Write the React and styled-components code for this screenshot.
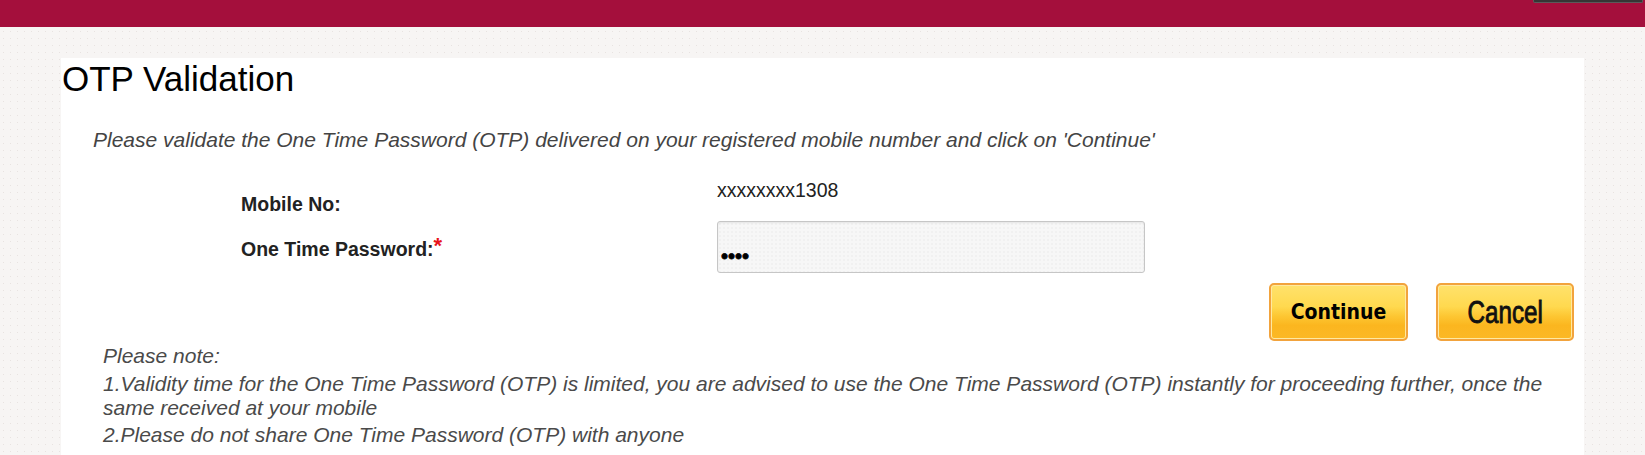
import React from 'react';
import styled, { createGlobalStyle } from 'styled-components';

const GlobalStyle = createGlobalStyle`
    html, body {
        margin: 0;
        padding: 0;
        overflow: hidden;
    }

    body {
        font-family: "Liberation Sans", Arial, sans-serif;
        background-color: #f7f5f4;
        background-image: radial-gradient(#e8e3e1 0.7px, transparent 1px);
        background-size: 7px 7px;
    }
`;

const Header = styled.header`
    position: relative;
    height: 27px;
    background-color: #a40f3c;
`;

const HeaderTab = styled.div`
    position: absolute;
    top: 0;
    right: 2px;
    width: 108px;
    height: 2px;
    background-color: #353535;
    border: 1px solid #5a5a5a;
    border-top: none;
    border-radius: 0 0 2px 2px;
`;

const Page = styled.main`
    padding: 31px 0 0 61px;
`;

const Panel = styled.section`
    width: 1523px;
    min-height: 420px;
    background-color: #fff;
`;

const Title = styled.h1`
    margin: 0;
    padding: 1px 0 0 1px;
    font-size: 35px;
    line-height: 40px;
    font-weight: normal;
    color: #000;
`;

const Intro = styled.p`
    margin: 29px 0 0 32px;
    font-size: 21px;
    line-height: 24px;
    font-style: italic;
    color: #444;
`;

const FormTable = styled.div`
    margin-top: 26px;
    padding-left: 180px;
`;

const FieldRow = styled.div`
    display: flex;
    align-items: flex-start;
    height: ${(p) => p.$height}px;
`;

const Label = styled.div`
    width: 476px;
    padding-top: ${(p) => p.$top}px;
    font-size: 19.5px;
    line-height: 24px;
    font-weight: bold;
    color: #222;
`;

const Required = styled.span`
    color: #e8141c;
    font-size: 22px;
    vertical-align: 3px;
`;

const Value = styled.div`
    font-size: 19.5px;
    line-height: 24px;
    color: #222;
`;

const PasswordInput = styled.input`
    box-sizing: border-box;
    width: 428px;
    height: 52px;
    margin: 0;
    padding: 18px 3px 0;
    border: 1px solid #c6c6c6;
    border-radius: 3px;
    background-color: #f7f7f7;
    background-image: radial-gradient(#eeeeee 0.6px, transparent 0.9px);
    background-size: 4px 4px;
    box-shadow: inset 0 1px 2px rgba(0, 0, 0, 0.08);
    font-family: "Liberation Sans", Arial, sans-serif;
    font-size: 20px;
    color: #000;
    -webkit-text-stroke: 0.8px #000;
    outline: none;
`;

const ButtonRow = styled.div`
    display: flex;
    justify-content: flex-end;
    gap: 28px;
    margin-top: 10px;
    padding-right: 10px;
`;

const YellowButton = styled.button`
    box-sizing: border-box;
    width: ${(p) => p.$width}px;
    height: 58px;
    margin: 0;
    padding: 0;
    border: 2px solid #f2a33d;
    border-radius: 5px;
    background: linear-gradient(
        #ffe26c 0%,
        #ffd94f 40%,
        #fdc632 58%,
        #fbb61f 75%,
        #fcb825 100%
    );
    box-shadow: inset 0 0 0 1px #ffe9a0;
    color: #000;
    cursor: pointer;
`;

const ContinueText = styled.span`
    font-family: "DejaVu Sans Condensed", "DejaVu Sans", sans-serif;
    font-stretch: condensed;
    font-weight: bold;
    font-size: 21px;
`;

const CancelText = styled.span`
    display: inline-block;
    padding-top: 2px;
    font-family: "Liberation Sans", Arial, sans-serif;
    font-size: 31px;
    color: #111;
    -webkit-text-stroke: 0.9px #111;
    transform: scaleX(0.78);
`;

const Notes = styled.div`
    margin-top: 3px;
    padding: 0 10px 0 42px;
    font-size: 21px;
    line-height: 24px;
    font-style: italic;
    color: #4a4a4a;
`;

const NoteItem = styled.div`
    margin-top: 3.5px;
`;

function App() {
    return (
        <>
            <GlobalStyle />
            <Header>
                <HeaderTab />
            </Header>
            <Page>
                <Panel>
                    <Title>OTP Validation</Title>
                    <Intro>
                        Please validate the One Time Password (OTP) delivered on your
                        registered mobile number and click on 'Continue'
                    </Intro>
                    <FormTable>
                        <FieldRow $height={43}>
                            <Label $top={14}>Mobile No:</Label>
                            <Value>xxxxxxxx1308</Value>
                        </FieldRow>
                        <FieldRow $height={52}>
                            <Label $top={13}>
                                One Time Password:<Required>*</Required>
                            </Label>
                            <PasswordInput type="password" value="1234" readOnly />
                        </FieldRow>
                    </FormTable>
                    <ButtonRow>
                        <YellowButton $width={139}>
                            <ContinueText>Continue</ContinueText>
                        </YellowButton>
                        <YellowButton $width={138}>
                            <CancelText>Cancel</CancelText>
                        </YellowButton>
                    </ButtonRow>
                    <Notes>
                        <div>Please note:</div>
                        <NoteItem>
                            1.Validity time for the One Time Password (OTP) is limited, you
                            are advised to use the One Time Password (OTP) instantly for
                            proceeding further, once the same received at your mobile
                        </NoteItem>
                        <NoteItem>
                            2.Please do not share One Time Password (OTP) with anyone
                        </NoteItem>
                    </Notes>
                </Panel>
            </Page>
        </>
    );
}

export default App;
